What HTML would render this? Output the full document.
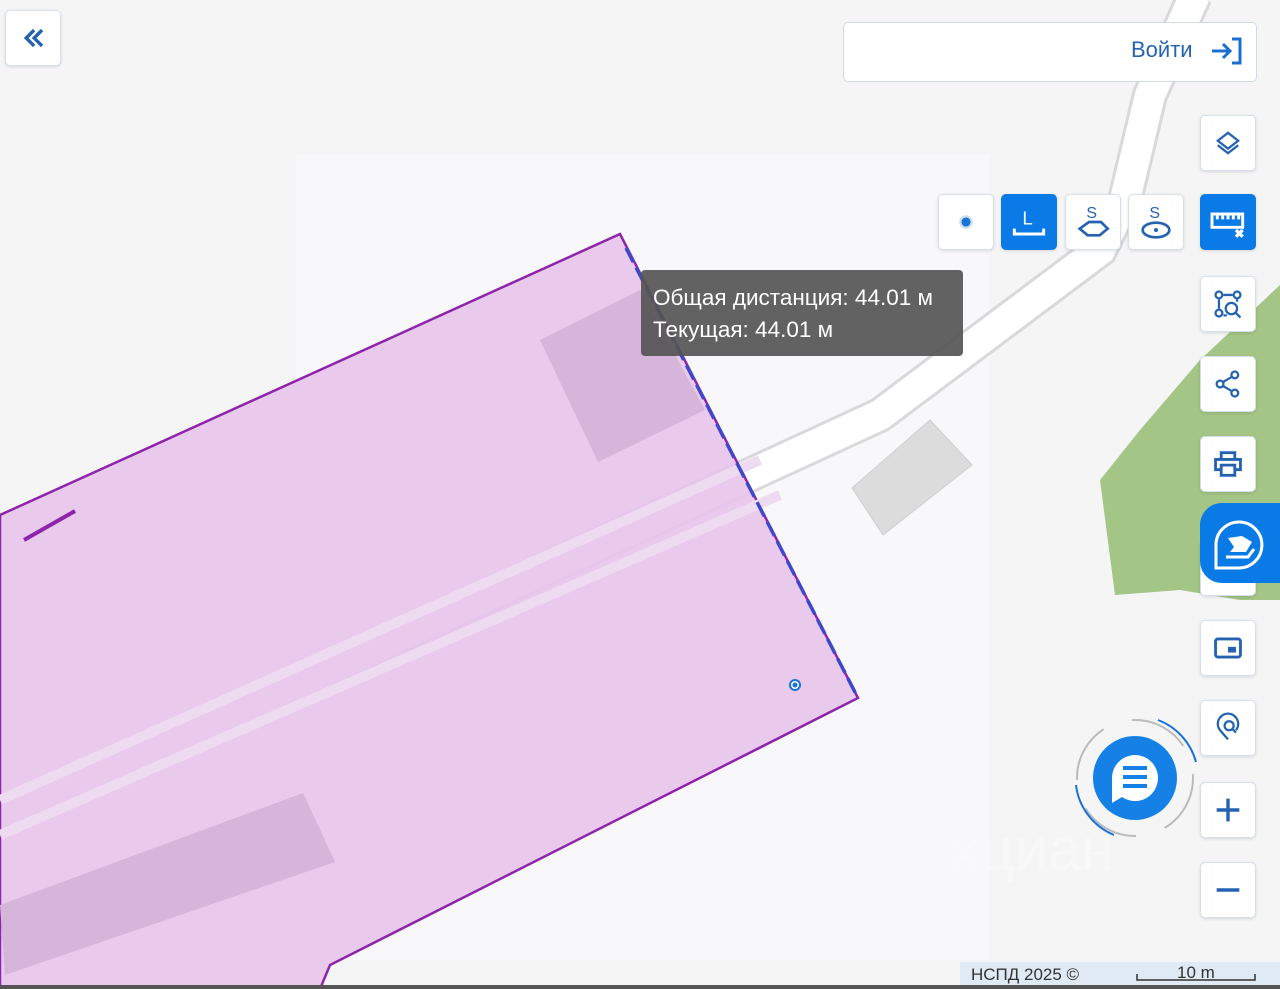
<!DOCTYPE html>
<html><head><meta charset="utf-8"><style>
body{margin:0;width:1280px;height:989px;overflow:hidden;background:#f5f5f6;font-family:"Liberation Sans",sans-serif;position:relative}
.b{position:absolute;width:56px;height:56px;background:#fff;border:1px solid #d6e0ec;border-radius:5px;box-sizing:border-box;box-shadow:0 1px 3px rgba(0,0,0,.12);display:flex;align-items:center;justify-content:center}
.b.on{background:#0a7ae6;border-color:#0a7ae6}
svg.i{width:34px;height:34px}
</style></head><body>
<svg width="1280" height="989" style="position:absolute;left:0;top:0">
<rect x="296" y="155" width="694" height="805" fill="#f8f7f9"/>
<polygon points="1100,480 1140,430 1200,360 1280,285 1280,600 1240,600 1180,590 1115,595" fill="#a3c585"/>
<path d="M1195,-5 L1150,95 L1125,200 L1100,250 L880,415 L0,820" fill="none" stroke="#d9d9dc" stroke-width="36"/>
<path d="M1195,-5 L1150,95 L1125,200 L1100,250 L880,415 L0,820" fill="none" stroke="#fff" stroke-width="30"/>
<polygon points="883,535 852,488 930,420 972,465 " fill="#dcdcdc" stroke="#cfcfcf"/>
<polygon points="620,234 858,698 330,965 320,989 0,989 0,515" fill="#e7c6ec" fill-opacity="0.92" stroke="#8e24aa" stroke-width="2.5"/>
<path d="M0,800 L760,460" stroke="#eedbf1" stroke-width="10" fill="none"/>
<path d="M0,835 L780,495" stroke="#eedbf1" stroke-width="10" fill="none"/>
<polygon points="540,340 640,290 705,410 598,462" fill="#d5b5d9"/>
<polygon points="0,905 303,793 335,862 5,975" fill="#d5b5d9"/>
<path d="M24,540 L75,511" stroke="#8e24aa" stroke-width="4"/>
<path d="M626,248 L858,698" stroke="#3f48c8" stroke-width="3.5" stroke-dasharray="16,6"/>
<circle cx="795" cy="685" r="5" fill="#fff" stroke="#1a73d6" stroke-width="2"/><circle cx="795" cy="685" r="2.5" fill="#1a73d6"/>
<rect x="641" y="270" width="322" height="86" rx="4" fill="#555" fill-opacity="0.92"/>
<text x="653" y="305" fill="#fff" font-size="22.5" font-family="Liberation Sans">Общая дистанция: 44.01 м</text>
<text x="653" y="337" fill="#fff" font-size="22.5" font-family="Liberation Sans">Текущая: 44.01 м</text>
<text x="950" y="870" fill="#fff" font-size="60" opacity="0.3">хциан</text>
<circle cx="1135" cy="778" r="58" fill="none" stroke="#bbb" stroke-width="2" stroke-dasharray="60,30"/>
<circle cx="1135" cy="778" r="42" fill="#1581e6"/>
<path d="M1112,778a23,23 0 1 1 10,19 l-10,6z" fill="#fff"/>
<path d="M1123,768h24M1123,777h24M1123,786h24" stroke="#1581e6" stroke-width="4"/>
<path d="M1158,720a62,62 0 0 1 38,42M1114,835a62,62 0 0 1 -38,-50" stroke="#1a73d6" stroke-width="2" fill="none"/>
<rect x="960" y="962" width="320" height="24" fill="#dfeaf5"/>
<text x="971" y="980" font-size="17" fill="#333">НСПД 2025 ©</text>
<text x="1177" y="978" font-size="17" fill="#333">10 m</text>
<path d="M1137,974v6h118v-6" stroke="#333" stroke-width="1.5" fill="none"/>
<rect x="0" y="985" width="1280" height="4" fill="#555"/>
</svg>
<div class="b" style="left:5px;top:10px"><svg class="i" viewBox="0 0 30 30"><path d="M16 8l-7 7 7 7M23 8l-7 7 7 7" stroke="#2563b0" stroke-width="3" fill="none"/></svg></div>
<div style="position:absolute;left:843px;top:22px;width:414px;height:60px;background:#fff;border:1px solid #cfdbe8;border-radius:5px;box-sizing:border-box"></div>
<div style="position:absolute;left:1131px;top:37px;font-size:22px;color:#2563b0">Войти</div>
<svg style="position:absolute;left:1210px;top:36px" width="34" height="30" viewBox="0 0 34 30"><path d="M2 15h18M13 8l7 7-7 7M22 3h8v24h-8" stroke="#1a6fd0" stroke-width="3" fill="none"/></svg>
<div class="b" style="left:1200px;top:115px"><svg class="i" viewBox="0 0 30 30"><path d="M15 6l9 7-9 7-9-7z M6 17l9 7 9-7" stroke="#2563b0" stroke-width="2" fill="none"/></svg></div>
<div class="b" style="left:938px;top:194px"><svg class="i" viewBox="0 0 30 30"><circle cx="15" cy="15" r="5" fill="#1a73d6" stroke="#cde" stroke-width="2"/></svg></div>
<div class="b on" style="left:1001px;top:194px"><svg width="40" height="40" viewBox="0 0 30 30"><text x="10" y="17" font-size="14" fill="#fff" font-family="Liberation Sans">L</text><path d="M4 20v4h22v-4" stroke="#fff" stroke-width="2.2" fill="none"/></svg></div>
<div class="b" style="left:1065px;top:194px"><svg width="40" height="40" viewBox="0 0 30 30"><text x="10" y="12" font-size="12" fill="#2563b0" font-family="Liberation Sans">S</text><path d="M5 20l7-5h9l5 5-6 5h-9z" stroke="#2563b0" stroke-width="2" fill="none"/></svg></div>
<div class="b" style="left:1128px;top:194px"><svg width="40" height="40" viewBox="0 0 30 30"><text x="10" y="12" font-size="12" fill="#2563b0" font-family="Liberation Sans">S</text><ellipse cx="15" cy="21" rx="10" ry="5.5" stroke="#2563b0" stroke-width="2" fill="none"/><circle cx="15" cy="21" r="1.5" fill="#2563b0"/></svg></div>
<div class="b on" style="left:1200px;top:194px"><svg width="40" height="40" viewBox="0 0 30 30"><path d="M3 9h23v10h-23z M7 9v4M11 9v4M15 9v4M19 9v4M23 9v4" stroke="#fff" stroke-width="2.2" fill="none"/><path d="M21 21l5 5M26 21l-5 5" stroke="#fff" stroke-width="2.5"/></svg></div>
<div class="b" style="left:1200px;top:276px"><svg class="i" viewBox="0 0 30 30"><circle cx="7" cy="7" r="3" stroke="#2563b0" stroke-width="2" fill="none"/><circle cx="23" cy="7" r="3" stroke="#2563b0" stroke-width="2" fill="none"/><circle cx="7" cy="23" r="3" stroke="#2563b0" stroke-width="2" fill="none"/><circle cx="18" cy="19" r="5" stroke="#2563b0" stroke-width="2" fill="none"/><path d="M22 23l4 4M11 7h8M7 11v8M23 11v2M11 25h3" stroke="#2563b0" stroke-width="2"/></svg></div>
<div class="b" style="left:1200px;top:356px"><svg class="i" viewBox="0 0 30 30"><circle cx="21" cy="7" r="3" stroke="#2563b0" stroke-width="2" fill="none"/><circle cx="8" cy="15" r="3" stroke="#2563b0" stroke-width="2" fill="none"/><circle cx="21" cy="23" r="3" stroke="#2563b0" stroke-width="2" fill="none"/><path d="M11 13l7-4M11 17l7 4" stroke="#2563b0" stroke-width="2"/></svg></div>
<div class="b" style="left:1200px;top:436px"><svg class="i" viewBox="0 0 30 30"><path d="M9 11V5h12v6M9 20H4v-9h22v9h-5M9 16h12v9H9z" stroke="#2563b0" stroke-width="2.5" fill="none"/></svg></div>
<div class="b" style="left:1200px;top:540px"></div>
<div style="position:absolute;left:1200px;top:503px;width:80px;height:80px;background:#0a7ae6;border-radius:22px 0 0 22px"></div>
<svg style="position:absolute;left:1208px;top:513px" width="62" height="62" viewBox="0 0 62 62"><path d="M8 55V30a23 23 0 1 1 23 25z" stroke="#fff" stroke-width="3" fill="none"/><path d="M20 25l14-2 10 6-6 10H22l4-5z" fill="#fff"/><path d="M18 44h22l6-8" stroke="#fff" stroke-width="3" fill="none"/></svg>
<div class="b" style="left:1200px;top:620px"><svg class="i" viewBox="0 0 30 30"><rect x="4" y="7" width="22" height="16" rx="2" stroke="#2563b0" stroke-width="2.5" fill="none"/><rect x="15" y="14" width="7" height="5" fill="#2563b0"/></svg></div>
<div class="b" style="left:1200px;top:700px"><svg class="i" viewBox="0 0 30 30"><path d="M15 25l-7-8a9 9 0 1 1 14 0" stroke="#2563b0" stroke-width="2" fill="none"/><circle cx="16" cy="13" r="4" stroke="#2563b0" stroke-width="2" fill="none"/><path d="M19 16l3 3" stroke="#2563b0" stroke-width="2"/></svg></div>
<div class="b" style="left:1200px;top:782px"><svg class="i" viewBox="0 0 30 30"><path d="M15 5v20M5 15h20" stroke="#2563b0" stroke-width="3"/></svg></div>
<div class="b" style="left:1200px;top:862px"><svg class="i" viewBox="0 0 30 30"><path d="M5 15h20" stroke="#2563b0" stroke-width="3"/></svg></div>
</body></html>
